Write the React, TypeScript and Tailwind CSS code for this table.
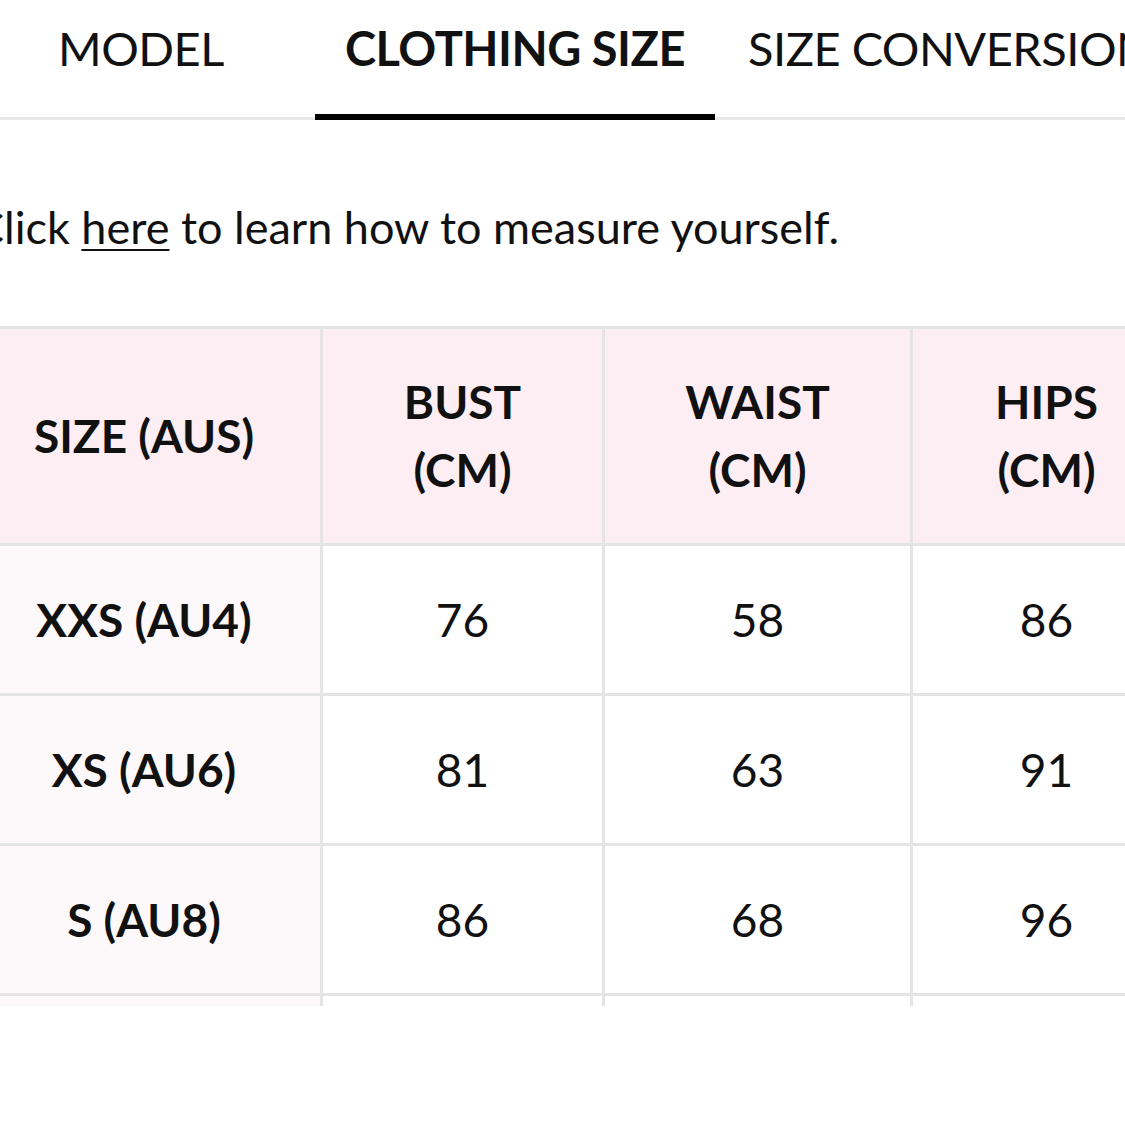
import * as React from 'react';

const rows = [
	{size: 'XXS (AU4)', bust: '76', waist: '58', hips: '86'},
	{size: 'XS (AU6)', bust: '81', waist: '63', hips: '91'},
	{size: 'S (AU8)', bust: '86', waist: '68', hips: '96'},
	{size: 'M (AU10)', bust: '91', waist: '73', hips: '101'},
];

const cell = 'border-[3px] border-[#e4e4e4] text-center align-middle';

const Tabs = () => (
	<div className="flex h-[120px] items-stretch border-b-[3px] border-[#e8e8e8] text-[47px] leading-none tracking-[-0.5px]">
		<div className="w-[315px] shrink-0 pl-[58px] pt-[25px]">MODEL</div>
		<div className="-mb-[3px] w-[400px] shrink-0 border-b-[6px] border-black pt-[25px] text-center font-bold">
			CLOTHING SIZE
		</div>
		<div className="shrink-0 whitespace-nowrap pl-[33px] pt-[25px]">SIZE CONVERSION</div>
	</div>
);

export default function App() {
	return (
		<div
			className="h-[1125px] w-[1125px] overflow-hidden bg-white text-[#111]"
			style={{fontFamily: 'Lato, "Open Sans", sans-serif'}}
		>
			<Tabs />
			<p className="-ml-[26px] mt-[85px] whitespace-nowrap text-[45px] leading-none">
				Click <span className="underline decoration-2 underline-offset-[5px]">here</span> to learn how to measure yourself.
			</p>
			<div className="mt-[76px] h-[680px] overflow-hidden">
				<table className="-ml-[35px] w-[1215px] table-fixed border-collapse text-[46px] leading-[68px]">
					<colgroup>
						<col className="w-[355px]" />
						<col className="w-[282px]" />
						<col className="w-[308px]" />
						<col className="w-[270px]" />
					</colgroup>
					<thead>
						<tr className="h-[217px] bg-[#fdeef4] font-bold">
							<th className={cell}>SIZE (AUS)</th>
							<th className={cell}>BUST<br />(CM)</th>
							<th className={cell}>WAIST<br />(CM)</th>
							<th className={cell}>HIPS<br />(CM)</th>
						</tr>
					</thead>
					<tbody>
						{rows.map((r) => (
							<tr key={r.size} className="h-[150px]">
								<td className={`${cell} bg-[#fdf8f9] font-bold`}>{r.size}</td>
								<td className={cell}>{r.bust}</td>
								<td className={cell}>{r.waist}</td>
								<td className={cell}>{r.hips}</td>
							</tr>
						))}
					</tbody>
				</table>
			</div>
		</div>
	);
}
